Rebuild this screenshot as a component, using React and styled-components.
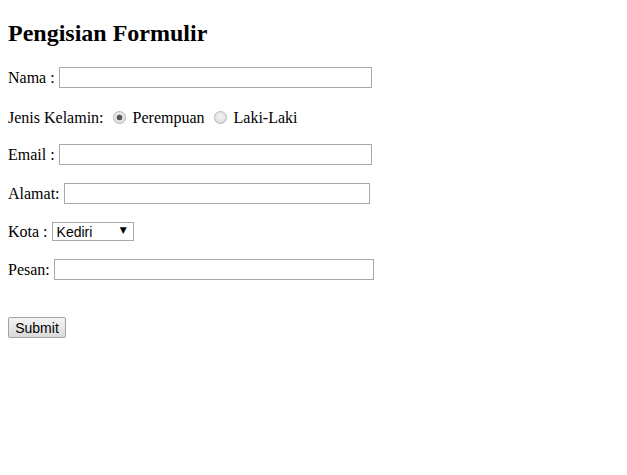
import React, { useState } from "react";
import styled, { createGlobalStyle } from "styled-components";

const GlobalStyle = createGlobalStyle`
  body {
    margin: 0;
    padding: 8px;
    background: #ffffff;
    color: #000000;
    font-family: "Liberation Serif", "Times New Roman", serif;
    font-size: 16px;
  }
`;

const Title = styled.h2`
  margin: 12px 0 20px;
  font-size: 24px;
  line-height: 27px;
  font-weight: bold;
`;

const Form = styled.form`
  display: flex;
  flex-direction: column;
  align-items: flex-start;
`;

const Row = styled.div`
  display: flex;
  align-items: center;
  gap: 4px;
  height: ${(p) => p.h || 21}px;
  margin-top: ${(p) => p.space || 0}px;
  line-height: 18px;
`;

const TextInput = styled.input`
  box-sizing: border-box;
  width: ${(p) => p.w}px;
  height: 21px;
  margin: 0;
  padding: 1px 2px;
  border: 1px solid #a9a9a9;
  background: #ffffff;
  font: 13px "Liberation Sans", Arial, sans-serif;
  outline: none;
`;

const RadioGroup = styled.label`
  display: flex;
  align-items: center;
`;

const Radio = styled.input`
  appearance: none;
  box-sizing: border-box;
  width: 13px;
  height: 13px;
  margin: 0 7px 0 5px;
  position: relative;
  top: -1px;
  border-radius: 50%;
  border: 1px solid #b5b5b5;
  background: radial-gradient(circle at 50% 40%, #f4f4f4 0%, #e4e4e4 60%, #d0d0d0 100%);

  &:checked {
    background:
      radial-gradient(circle, #555555 0 2.6px, transparent 3.2px),
      radial-gradient(circle at 50% 40%, #f4f4f4 0%, #e4e4e4 60%, #d0d0d0 100%);
  }
`;

const SelectBox = styled.div`
  position: relative;
  display: inline-block;
`;

const Select = styled.select`
  appearance: none;
  box-sizing: border-box;
  width: 82px;
  height: 19px;
  margin: 0;
  padding: 0 0 0 4px;
  border: 1px solid #a9a9a9;
  border-radius: 0;
  background: #ffffff;
  color: #000000;
  font: 14px "Liberation Sans", Arial, sans-serif;
  outline: none;
`;

const Arrow = styled.span`
  position: absolute;
  right: 7px;
  top: 3px;
  font: 9px "DejaVu Sans", sans-serif;
  pointer-events: none;
`;

const SubmitButton = styled.button`
  box-sizing: border-box;
  width: 58px;
  height: 21px;
  margin: 0;
  padding: 0 6px;
  border: 1px solid #a3a3a3;
  border-radius: 2px;
  background: linear-gradient(#f5f5f5, #e6e6e6 50%, #dadada);
  color: #000000;
  font: 14px "Liberation Sans", Arial, sans-serif;
`;

export default function App() {
  const [gender, setGender] = useState("perempuan");
  const [kota, setKota] = useState("Kediri");

  return (
    <>
      <GlobalStyle />
      <Title>Pengisian Formulir</Title>
      <Form onSubmit={(e) => e.preventDefault()}>
        <Row>
          <span>Nama :</span>
          <TextInput type="text" w={313} />
        </Row>
        <Row h={20} space={20}>
          <span>Jenis Kelamin:</span>
          <RadioGroup>
            <Radio
              type="radio"
              name="jk"
              checked={gender === "perempuan"}
              onChange={() => setGender("perempuan")}
            />
            Perempuan
          </RadioGroup>
          <RadioGroup>
            <Radio
              type="radio"
              name="jk"
              checked={gender === "laki"}
              onChange={() => setGender("laki")}
            />
            Laki-Laki
          </RadioGroup>
        </Row>
        <Row space={16}>
          <span>Email :</span>
          <TextInput type="email" w={313} />
        </Row>
        <Row space={18}>
          <span>Alamat:</span>
          <TextInput type="text" w={306} />
        </Row>
        <Row h={19} space={18}>
          <span>Kota :</span>
          <SelectBox>
            <Select value={kota} onChange={(e) => setKota(e.target.value)}>
              <option>Kediri</option>
              <option>Malang</option>
              <option>Surabaya</option>
            </Select>
            <Arrow>▼</Arrow>
          </SelectBox>
        </Row>
        <Row space={18}>
          <span>Pesan:</span>
          <TextInput type="text" w={320} />
        </Row>
        <Row space={37}>
          <SubmitButton type="submit">Submit</SubmitButton>
        </Row>
      </Form>
    </>
  );
}
